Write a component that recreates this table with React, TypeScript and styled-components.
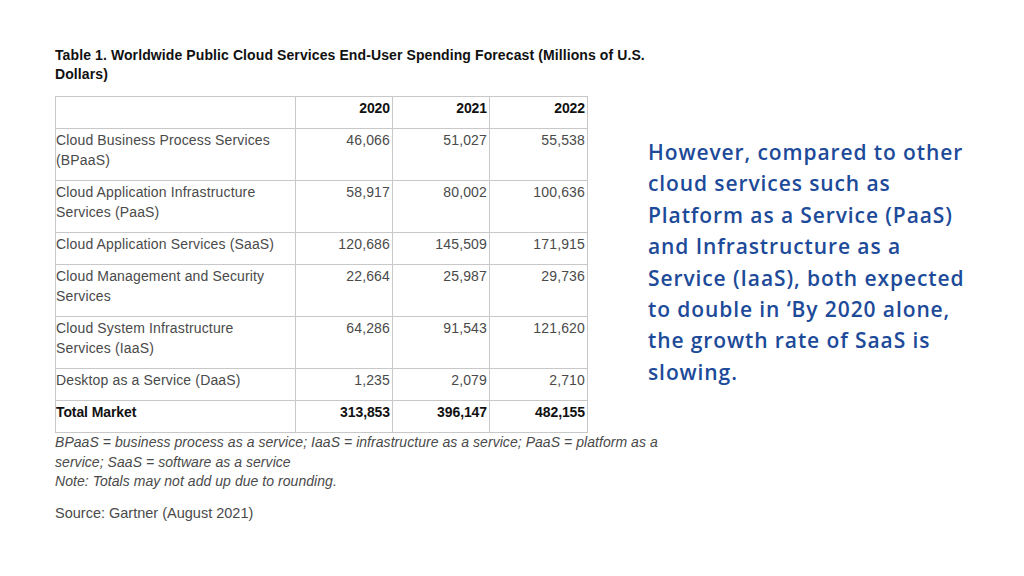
import React from "react";
import styled, { createGlobalStyle } from "styled-components";

const Global = createGlobalStyle`
  html, body { margin: 0; padding: 0; background: #ffffff; }
  body { width: 1024px; height: 576px; overflow: hidden; }
`;

const Page = styled.div`
  display: flex;
  align-items: flex-start;
  width: 1024px;
  height: 576px;
  box-sizing: border-box;
  padding: 46px 0 0 55px;
  background: #ffffff;
`;

const LeftColumn = styled.div`
  flex: 0 0 593px;
  min-width: 0;
  display: flex;
  flex-direction: column;
  font-family: "Liberation Sans", Arial, sans-serif;
`;

const Title = styled.h1`
  margin: 0 0 12px 0;
  font-size: 14px;
  line-height: 19px;
  font-weight: 700;
  color: #111111;
  white-space: nowrap;
  letter-spacing: 0.1px;
`;

const Table = styled.table`
  border-collapse: collapse;
  width: 533px;
  table-layout: fixed;
  color: #4a4a4a;
  font-size: 14px;
  line-height: 20px;
`;

const Cell = styled.td<{ $num?: boolean; $bold?: boolean }>`
  border: 1px solid #c8c8c8;
  padding: 1px 2px 10px ${(p) => (p.$num ? "2px" : "0px")};
  vertical-align: top;
  text-align: ${(p) => (p.$num ? "right" : "left")};
  font-weight: ${(p) => (p.$bold ? 700 : 400)};
  color: ${(p) => (p.$bold ? "#111111" : "#4a4a4a")};
  letter-spacing: ${(p) => (p.$bold ? "-0.1px" : "0.15px")};
`;

const Notes = styled.p`
  margin: 0;
  font-size: 14px;
  line-height: 19.5px;
  font-style: italic;
  color: #4a4a4a;
  white-space: nowrap;
  letter-spacing: 0.05px;
`;

const Source = styled.p`
  margin: 12px 0 0 0;
  font-size: 14.5px;
  line-height: 19.5px;
  color: #4a4a4a;
  white-space: nowrap;
`;

const Paragraph = styled.p`
  margin: 91px 0 0 0;
  font-family: "Open Sans", "Noto Sans", sans-serif;
  font-weight: 600;
  font-size: 21px;
  line-height: 31.4px;
  letter-spacing: 0.9px;
  color: #1d4a99;
  white-space: nowrap;
`;

type Row = { label: React.ReactNode; values: string[]; bold?: boolean };

const rows: Row[] = [
  { label: <>Cloud Business Process Services<br />(BPaaS)</>, values: ["46,066", "51,027", "55,538"] },
  { label: <>Cloud Application Infrastructure<br />Services (PaaS)</>, values: ["58,917", "80,002", "100,636"] },
  { label: "Cloud Application Services (SaaS)", values: ["120,686", "145,509", "171,915"] },
  { label: <>Cloud Management and Security<br />Services</>, values: ["22,664", "25,987", "29,736"] },
  { label: <>Cloud System Infrastructure<br />Services (IaaS)</>, values: ["64,286", "91,543", "121,620"] },
  { label: "Desktop as a Service (DaaS)", values: ["1,235", "2,079", "2,710"] },
  { label: "Total Market", values: ["313,853", "396,147", "482,155"], bold: true },
];

export default function App() {
  return (
    <>
      <Global />
      <Page>
        <LeftColumn>
          <Title>
            Table 1. Worldwide Public Cloud Services End-User Spending Forecast (Millions of U.S.
            <br />
            Dollars)
          </Title>
          <Table>
            <colgroup>
              <col style={{ width: 240 }} />
              <col style={{ width: 97 }} />
              <col style={{ width: 97 }} />
              <col style={{ width: 98 }} />
            </colgroup>
            <tbody>
              <tr>
                <Cell />
                <Cell $num $bold>2020</Cell>
                <Cell $num $bold>2021</Cell>
                <Cell $num $bold>2022</Cell>
              </tr>
              {rows.map((r, i) => (
                <tr key={i}>
                  <Cell $bold={r.bold}>{r.label}</Cell>
                  {r.values.map((v) => (
                    <Cell key={v} $num $bold={r.bold}>
                      {v}
                    </Cell>
                  ))}
                </tr>
              ))}
            </tbody>
          </Table>
          <Notes>
            BPaaS = business process as a service; IaaS = infrastructure as a service; PaaS = platform as a
            <br />
            service; SaaS = software as a service
            <br />
            Note: Totals may not add up due to rounding.
          </Notes>
          <Source>Source: Gartner (August 2021)</Source>
        </LeftColumn>
        <Paragraph>
          However, compared to other
          <br />
          cloud services such as
          <br />
          Platform as a Service (PaaS)
          <br />
          and Infrastructure as a
          <br />
          Service (IaaS), both expected
          <br />
          to double in ‘By 2020 alone,
          <br />
          the growth rate of SaaS is
          <br />
          slowing.
        </Paragraph>
      </Page>
    </>
  );
}
